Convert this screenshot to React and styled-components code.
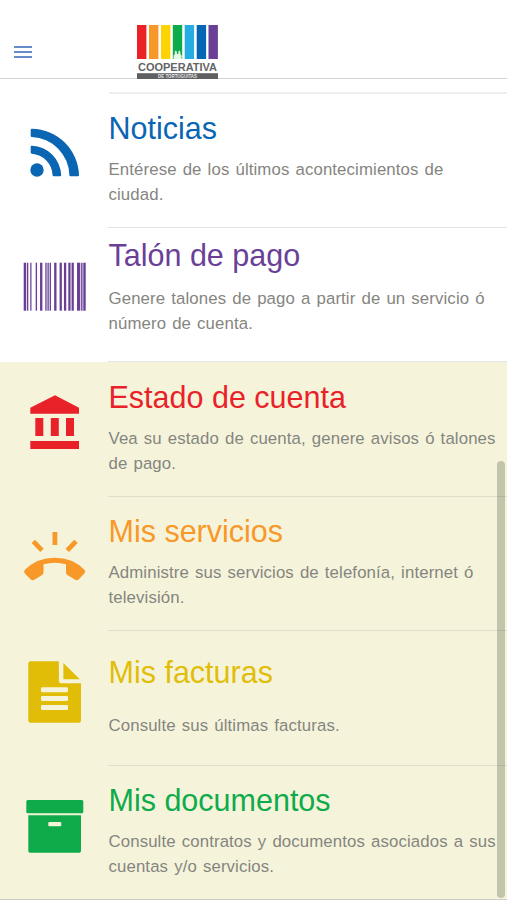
import React from "react";
import styled, { createGlobalStyle } from "styled-components";

const GlobalStyle = createGlobalStyle`
  * {
    box-sizing: border-box;
  }
  body {
    margin: 0;
    background: #fff;
    font-family: "Liberation Sans", Arial, sans-serif;
  }
`;

const logoBars = [
  { x: 0, color: "#ec2027" },
  { x: 12, color: "#f89828" },
  { x: 24, color: "#fed304" },
  { x: 35.8, color: "#0cab4b" },
  { x: 47.7, color: "#27ace4" },
  { x: 59.7, color: "#0566b3" },
  { x: 71.5, color: "#6a3f98" },
];

// [x, width] on a 1792 units wide code
const barcodeBars = [
  [0, 72], [95, 38], [189, 36], [346, 40], [472, 68], [624, 38],
  [687, 38], [750, 38], [880, 68], [1037, 66], [1163, 66], [1289, 66],
  [1383, 66], [1541, 94], [1660, 40], [1722, 70],
];

function Logo() {
  return (
    <LogoSvg viewBox="0 0 81 54" role="img" aria-label="Cooperativa">
      {logoBars.map((bar) => (
        <rect key={bar.color} x={bar.x} y="0" width="9.4" height="34" fill={bar.color} />
      ))}
      <path
        d="M36.6 34v-3.600l1.200-1.200v-2.400l1-1.300 1 1.300v1.600l.8.8.8-.8v-1.600l1-1.300 1 1.300v2.400l1.200 1.200V34z"
        fill="#e9f7e4"
      />
      <text x="1" y="45.8" fontSize="11.3" fontWeight="700" textLength="79" lengthAdjust="spacingAndGlyphs" fill="#636466">
        COOPERATIVA
      </text>
      <rect x="0" y="48.2" width="81" height="5.8" fill="#5f6062" />
      <text x="21" y="52.9" fontSize="4.8" fontWeight="700" textLength="39" lengthAdjust="spacingAndGlyphs" fill="#e6e6e6">
        DE TORTUGUITAS
      </text>
    </LogoSvg>
  );
}

const rss = (
  <>
    <circle cx="13" cy="47" r="6.7" />
    <path d="M8 22.7A30.6 30.6 0 0 1 37.2 52.2q0 1.1-1.2 1.1h-6.2q-1.1 0-1.2-1.1A22.3 22.3 0 0 0 7.8 30.7q-1.1-.1-1.1-1.2v-5.7q0-1.2 1.3-1.1z" />
    <path d="M8 5.7A48 48 0 0 1 55 52.2q0 1.1-1.2 1.1h-7.2q-1.2 0-1.2-1.1A39 39 0 0 0 7.8 14.1q-1.1-.1-1.1-1.2V6.8q0-1.2 1.3-1.1z" />
  </>
);

const barcode = (
  <g transform="translate(-0.3 5.7) scale(0.0346 1)">
    {barcodeBars.map(([x, width]) => (
      <rect key={x} x={x} y="0" width={width} height="48" />
    ))}
  </g>
);

const bank = (
  <>
    <path d="M31 4.3 55 16.7v6H6.3v-6z" />
    <path d="M11.3 27h8v18h-8zM26.8 27h8v18h-8zM42 27h8v18h-8z" />
    <path d="M6.3 50H55v8H6.3z" />
  </>
);

const phone = (
  <>
    <path d="M28.5 6h4.8v13h-4.8z" />
    <path d="m9.3 15.4 8.7 9M52 15.4l-8.7 9" stroke="currentColor" strokeWidth="4.8" />
    <path d="M.7 44Q12.5 31.7 30.8 31.7T60.6 44q1.2 1.6 0 3.2l-6 6.4q-1.4 1.3-3 .3L43.4 49Q42 48.2 42 46.5V38.3Q31 35.1 19.5 38.3V46.5Q19.5 48.2 18.1 49L9.8 53.9q-1.6 1-3-.3L.6 47.2Q-.4 45.6.7 44z" />
  </>
);

const file = (
  <>
    <path
      d="M6.5 1.3H34.9V21q0 2.3 2.3 2.3H57v37.3q0 2.2-2.2 2.2H6.5q-2.2 0-2.2-2.2V3.5q0-2.2 2.2-2.2zM18.3 27.3q-1.3 0-1.3 1.3v2.4q0 1.3 1.3 1.3h24.4q1.3 0 1.3-1.3v-2.4q0-1.3-1.3-1.3zM18.3 36q-1.3 0-1.3 1.3v2.4q0 1.3 1.3 1.3h24.4q1.3 0 1.3-1.3v-2.4q0-1.3-1.3-1.3zM18.3 45q-1.3 0-1.3 1.3v2.4q0 1.3 1.3 1.3h24.4q1.3 0 1.3-1.3v-2.4q0-1.3-1.3-1.3z"
      fillRule="evenodd"
    />
    <path d="M39.4 3 55.9 19.3H39.4z" />
  </>
);

const box = (
  <>
    <rect x="2.3" y="5" width="57" height="13.3" rx="1.5" />
    <path
      d="M4.3 20.3H57v35.7q0 1.7-1.7 1.7H6q-1.7 0-1.7-1.7zM25.6 27q-1.3 0-1.3 1.3v1.7q0 1.3 1.3 1.3h10.4q1.3 0 1.3-1.3v-1.7q0-1.3-1.3-1.3z"
      fillRule="evenodd"
    />
  </>
);

const publicItems = [
  {
    title: "Noticias",
    lines: ["Entérese de los últimos acontecimientos de", "ciudad."],
    color: "#0a66b2",
    icon: rss,
    height: 134,
    top: 17,
    gap: 11,
  },
  {
    title: "Talón de pago",
    lines: ["Genere talones de pago a partir de un servicio ó", "número de cuenta."],
    color: "#6a3f98",
    icon: barcode,
    height: 134,
    top: 10,
    gap: 12.6,
  },
];

const privateItems = [
  {
    title: "Estado de cuenta",
    lines: ["Vea su estado de cuenta, genere avisos ó talones", "de pago."],
    color: "#e92229",
    icon: bank,
    height: 135,
    top: 18,
    gap: 10.6,
  },
  {
    title: "Mis servicios",
    lines: ["Administre sus servicios de telefonía, internet ó", "televisión."],
    color: "#f89828",
    icon: phone,
    height: 134,
    top: 17,
    gap: 11,
  },
  {
    title: "Mis facturas",
    lines: ["Consulte sus últimas facturas."],
    color: "#e2bd08",
    icon: file,
    height: 135,
    top: 24,
    gap: 23,
  },
  {
    title: "Mis documentos",
    lines: ["Consulte contratos y documentos asociados a sus", "cuentas y/o servicios."],
    color: "#0fab4b",
    icon: box,
    height: 134,
    top: 17,
    gap: 11,
  },
];

function MenuItem({ item, line, last }) {
  return (
    <Item $height={item.height}>
      <IconCell $color={item.color}>
        <svg width="62" height="62" viewBox="0 0 62 62" fill="currentColor" overflow="visible">
          {item.icon}
        </svg>
      </IconCell>
      <Content $top={item.top} $line={line} $last={last}>
        <Title $color={item.color}>{item.title}</Title>
        <Description $gap={item.gap}>
          {item.lines.map((text) => (
            <span key={text}>{text}</span>
          ))}
        </Description>
      </Content>
    </Item>
  );
}

function App() {
  return (
    <Page>
      <GlobalStyle />
      <Header>
        <MenuButton aria-label="Menú">
          <i />
          <i />
          <i />
        </MenuButton>
        <Logo />
      </Header>
      <ListTop />
      <List>
        {publicItems.map((item) => (
          <MenuItem key={item.title} item={item} line="#e3e4e6" />
        ))}
      </List>
      <List $highlight>
        {privateItems.map((item, index) => (
          <MenuItem key={item.title} item={item} line="#dfdecb" last={index === privateItems.length - 1} />
        ))}
      </List>
      <Scrollbar />
    </Page>
  );
}

const Page = styled.main`
  position: relative;
  width: 507px;
  height: 900px;
  overflow: hidden;
  background: #fff;
`;

const Header = styled.header`
  display: flex;
  align-items: flex-start;
  height: 79px;
  padding: 25px 0 0 14px;
  border-bottom: 1px solid #d2d3d5;
`;

const MenuButton = styled.button`
  display: flex;
  flex-direction: column;
  gap: 3px;
  width: 18px;
  margin: 21px 105px 0 0;
  padding: 0;
  border: none;
  background: none;
  i {
    height: 2px;
    background: #668bc8;
  }
`;

const LogoSvg = styled.svg`
  flex: none;
  width: 81px;
  height: 54px;
  margin-left: 0.4px;
`;

const ListTop = styled.div`
  height: 15px;
  margin-left: 109px;
  border-bottom: 2px solid #eeeeef;
`;

const List = styled.section`
  background: ${(props) => (props.$highlight ? "#f5f4db" : "#fff")};
`;

const Item = styled.article`
  display: grid;
  grid-template-columns: 108px 1fr;
  height: ${(props) => props.$height}px;
`;

const IconCell = styled.div`
  padding: 29px 0 0 24px;
  color: ${(props) => props.$color};
`;

const Content = styled.div`
  padding: ${(props) => props.$top}px 0 0 0.5px;
  border-bottom: 1px solid ${(props) => props.$line};
  ${(props) => props.$last && "margin-left: -108px; padding-left: 108.5px; border-color: #cbccc4;"}
`;

const Title = styled.h2`
  margin: 0;
  font-size: 30.5px;
  font-weight: 400;
  line-height: 35px;
  color: ${(props) => props.$color};
`;

const Description = styled.p`
  margin: ${(props) => props.$gap}px 0 0;
  font-size: 16.8px;
  letter-spacing: 0.12px;
  word-spacing: 1.25px;
  line-height: 25px;
  color: #858580;
  span {
    display: block;
    white-space: nowrap;
  }
`;

// overlay scrollbar, lies over the rows
const Scrollbar = styled.div`
  position: absolute;
  top: 461px;
  right: 2px;
  width: 8px;
  height: 437px;
  border-radius: 4px;
  background: rgba(90, 95, 75, 0.32);
`;

export default App;
